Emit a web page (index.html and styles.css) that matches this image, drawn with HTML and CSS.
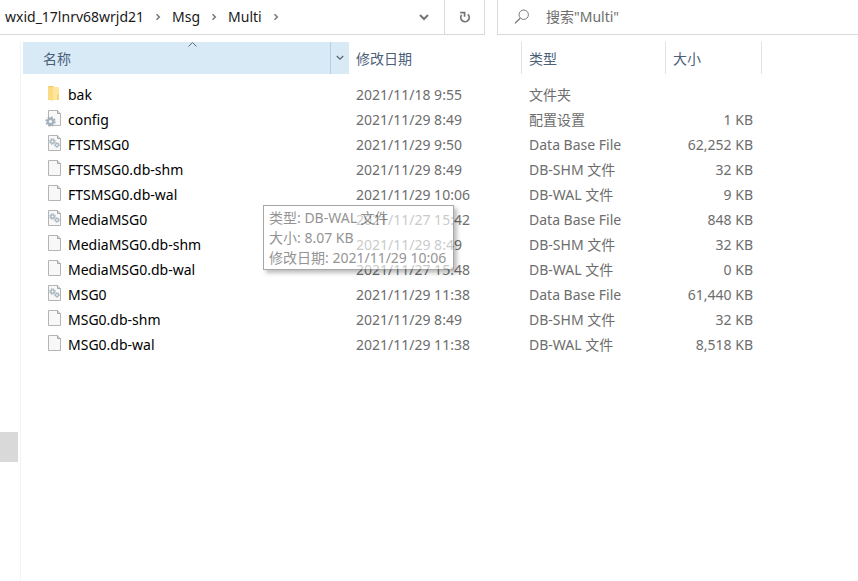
FILE: index.html
```html
<!DOCTYPE html>
<html lang="zh-CN">
<head>
    <meta charset="UTF-8">
    <meta name="viewport" content="width=device-width, initial-scale=1.0">
    <title>Multi</title>
    <link rel="stylesheet" href="styles.css">
</head>
<body>
    <!-- shared file icons -->
    <svg class="icon-defs" aria-hidden="true">
        <symbol id="page" viewBox="0 0 18 18">
            <path d="M3.5 .5h9l3 3v12h-12z" fill="#f8f8f8" stroke="#b4b4b4"/>
            <path d="M12.5 .5v3h3" fill="#dddddd" stroke="#a4a4a4"/>
        </symbol>
        <symbol id="gear" viewBox="0 0 12 12">
            <circle cx="6" cy="6" r="4.6" fill="none" stroke="#9eabb5" stroke-width="2" stroke-dasharray="2 1.6"/>
            <circle cx="6" cy="6" r="3" fill="#dde5ea" stroke="#9fb0bc" stroke-width="2"/>
            <circle cx="6" cy="6" r="1.2" fill="#ffffff"/>
        </symbol>
        <symbol id="database" viewBox="0 0 18 18">
            <use href="#page"/>
            <use href="#gear" x="4" y="3" width="7" height="7"/>
            <use href="#gear" x="9" y="7" width="6" height="6"/>
        </symbol>
        <symbol id="settings" viewBox="0 0 18 18">
            <use href="#page"/>
            <use href="#gear" x="0" y="6" width="11" height="11"/>
        </symbol>
        <symbol id="folder" viewBox="0 0 18 18">
            <path d="M3 1h6v14H3z" fill="#f3cf69"/>
            <path d="M7 2h7v13H7z" fill="#ffe69c"/>
            <path d="M3 1l5 3v12l-5-2z" fill="#fbdc82"/>
            <path d="M12 9h2v6h-2z" fill="#f4d477"/>
        </symbol>
        <symbol id="crumb" viewBox="0 0 8 8">
            <path d="M2.5 1.2L5.3 4 2.5 6.8" fill="none" stroke="#777777" stroke-width="1.5"/>
        </symbol>
    </svg>

    <header class="toolbar">
        <nav class="address">
            <a href="#">wxid_17lnrv68wrjd21</a>
            <svg class="crumb"><use href="#crumb"/></svg>
            <a href="#">Msg</a>
            <svg class="crumb"><use href="#crumb"/></svg>
            <a href="#">Multi</a>
            <svg class="crumb"><use href="#crumb"/></svg>
            <button class="history" aria-label="以前的位置">
                <svg width="10" height="8" viewBox="0 0 10 8"><path d="M1 2l4 4 4-4" fill="none" stroke="#757575" stroke-width="2"/></svg>
            </button>
            <button class="refresh" aria-label="刷新">
                <svg width="12" height="12" viewBox="0 0 12 12"><path d="M8.8 3.4A4.2 4.2 0 1 1 2.6 4" fill="none" stroke="#757575" stroke-width="1.8"/><path d="M1.2 1.6h4.4v4.2" fill="none" stroke="#757575" stroke-width="1.7"/></svg>
            </button>
        </nav>
        <label class="search">
            <svg width="16" height="16" viewBox="0 0 16 16"><circle cx="9.7" cy="5.7" r="4.7" fill="none" stroke="#777777"/><path d="M6.2 9.2L1 14.4" stroke="#777777" stroke-width="1.3"/></svg>
            <input type="text" placeholder='搜索"Multi"' aria-label="搜索">
        </label>
    </header>

    <main class="content">
        <div class="sidebar"><div class="thumb"></div></div>
        <div class="files">
            <table>
                <colgroup>
                    <col class="col-name"><col class="col-date"><col class="col-type"><col class="col-size">
                </colgroup>
                <thead>
                    <tr>
                        <th class="sorted">
                            <div class="name-head">
                                <span>名称</span>
                                <svg class="sort" width="9" height="5" viewBox="0 0 9 5"><path d="M.5 4.5l4-4 4 4" fill="none" stroke="#606b75"/></svg>
                                <button class="filter" aria-label="筛选">
                                    <svg width="8" height="6" viewBox="0 0 8 6"><path d="M.8 1l3.2 3.2L7.2 1" fill="none" stroke="#59636c" stroke-width="1.2"/></svg>
                                </button>
                            </div>
                        </th>
                        <th>修改日期</th>
                        <th>类型</th>
                        <th>大小</th>
                    </tr>
                </thead>
                <tbody>
                    <tr><td><svg><use href="#folder"/></svg>bak</td><td>2021/11/18 9:55</td><td>文件夹</td><td></td></tr>
                    <tr><td><svg><use href="#settings"/></svg>config</td><td>2021/11/29 8:49</td><td>配置设置</td><td>1 KB</td></tr>
                    <tr><td><svg><use href="#database"/></svg>FTSMSG0</td><td>2021/11/29 9:50</td><td>Data Base File</td><td>62,252 KB</td></tr>
                    <tr><td><svg><use href="#page"/></svg>FTSMSG0.db-shm</td><td>2021/11/29 8:49</td><td>DB-SHM 文件</td><td>32 KB</td></tr>
                    <tr><td><svg><use href="#page"/></svg>FTSMSG0.db-wal</td><td>2021/11/29 10:06</td><td>DB-WAL 文件</td><td>9 KB</td></tr>
                    <tr><td><svg><use href="#database"/></svg>MediaMSG0</td><td>2021/11/27 15:42</td><td>Data Base File</td><td>848 KB</td></tr>
                    <tr><td><svg><use href="#page"/></svg>MediaMSG0.db-shm</td><td>2021/11/29 8:49</td><td>DB-SHM 文件</td><td>32 KB</td></tr>
                    <tr><td><svg><use href="#page"/></svg>MediaMSG0.db-wal</td><td>2021/11/27 15:48</td><td>DB-WAL 文件</td><td>0 KB</td></tr>
                    <tr><td><svg><use href="#database"/></svg>MSG0</td><td>2021/11/29 11:38</td><td>Data Base File</td><td>61,440 KB</td></tr>
                    <tr><td><svg><use href="#page"/></svg>MSG0.db-shm</td><td>2021/11/29 8:49</td><td>DB-SHM 文件</td><td>32 KB</td></tr>
                    <tr><td><svg><use href="#page"/></svg>MSG0.db-wal</td><td>2021/11/29 11:38</td><td>DB-WAL 文件</td><td>8,518 KB</td></tr>
                </tbody>
            </table>

            <div class="tooltip" role="tooltip">
                <div>类型: DB-WAL 文件</div>
                <div>大小: 8.07 KB</div>
                <div>修改日期: 2021/11/29 10:06</div>
            </div>
        </div>
    </main>
</body>
</html>
```
FILE: styles.css
```css
* {
    box-sizing: border-box;
}

body {
    margin: 0;
    min-height: 100vh;
    display: flex;
    flex-direction: column;
    background: #fff;
    color: #6d6d6d;
    font-family: "Noto Sans", "Noto Sans CJK SC", sans-serif;
    font-size: 14px;
    line-height: 20px;
}

button {
    padding: 0;
    border: none;
    background: none;
    display: flex;
    align-items: center;
    justify-content: center;
}

.icon-defs {
    position: absolute;
    width: 0;
    height: 0;
}

/* address bar */
.toolbar {
    display: flex;
    gap: 12px;
    height: 35px;
}

.address {
    flex: 0 0 485px;
    display: flex;
    align-items: center;
    padding-left: 5px;
    border-right: 1px solid #d9d9d9;
    border-bottom: 1px solid #d9d9d9;
}

.address a {
    color: #1a1a1a;
    text-decoration: none;
}

.crumb {
    width: 8px;
    height: 8px;
    margin: 0 10px;
}

.history {
    width: 40px;
    height: 34px;
    margin-left: auto;
}

.refresh {
    width: 40px;
    height: 34px;
    border-left: 1px solid #d9d9d9;
}

.search {
    flex: 1;
    display: flex;
    align-items: center;
    gap: 16px;
    padding-left: 16px;
    border-left: 1px solid #d9d9d9;
    border-bottom: 1px solid #d9d9d9;
}

.search input {
    flex: 1;
    min-width: 0;
    padding: 0;
    border: none;
    outline: none;
    background: none;
    font: inherit;
}

.search input::placeholder {
    color: #6d6d6d;
}

/* list */
.content {
    flex: 1;
    display: flex;
    padding-top: 7px;
}

.sidebar {
    width: 21px;
    display: flex;
    align-items: flex-end;
    padding-bottom: 119px;
    border-right: 1px solid #f3f3f3;
}

.thumb {
    width: 18px;
    height: 30px;
    background: #d9d9d9;
}

.files {
    position: relative;
    flex: 1;
    padding-left: 2px;
}

table {
    width: 739px;
    table-layout: fixed;
    border-collapse: separate;
    border-spacing: 0;
}

.col-name {
    width: 326px;
}

.col-date {
    width: 173px;
}

.col-type {
    width: 144px;
}

.col-size {
    width: 96px;
}

th {
    height: 32px;
    padding: 2px 7px 0;
    border-right: 1px solid #e2e2e2;
    color: #4c607a;
    font-weight: 400;
    text-align: left;
}

th.sorted {
    padding: 0;
    border-right: none;
    background: #d9eaf7;
}

.name-head {
    position: relative;
    display: flex;
    align-items: center;
    height: 32px;
    padding-left: 20px;
}

.name-head span {
    padding-top: 2px;
}

.sort {
    position: absolute;
    top: 0;
    left: 165px;
}

.filter {
    width: 19px;
    height: 32px;
    margin-left: auto;
    border-left: 1px solid #b9cfdf;
}

tbody::before {
    content: "";
    display: block;
    height: 8px;
}

td {
    height: 25px;
    padding: 0 7px;
    white-space: nowrap;
}

td:first-child {
    padding-left: 22px;
    color: #000;
}

td:last-child {
    padding-right: 9px;
    text-align: right;
}

td svg {
    width: 18px;
    height: 18px;
    margin-right: 5px;
    vertical-align: -3px;
}

.tooltip {
    position: absolute;
    top: 163px;
    left: 242px;
    padding: 2px 7px 1px 5px;
    border: 1px solid #767676;
    background: #fff;
    box-shadow: 3px 3px 4px rgba(0, 0, 0, 0.4);
    color: #575757;
    opacity: 0.64;
    white-space: nowrap;
}
```
